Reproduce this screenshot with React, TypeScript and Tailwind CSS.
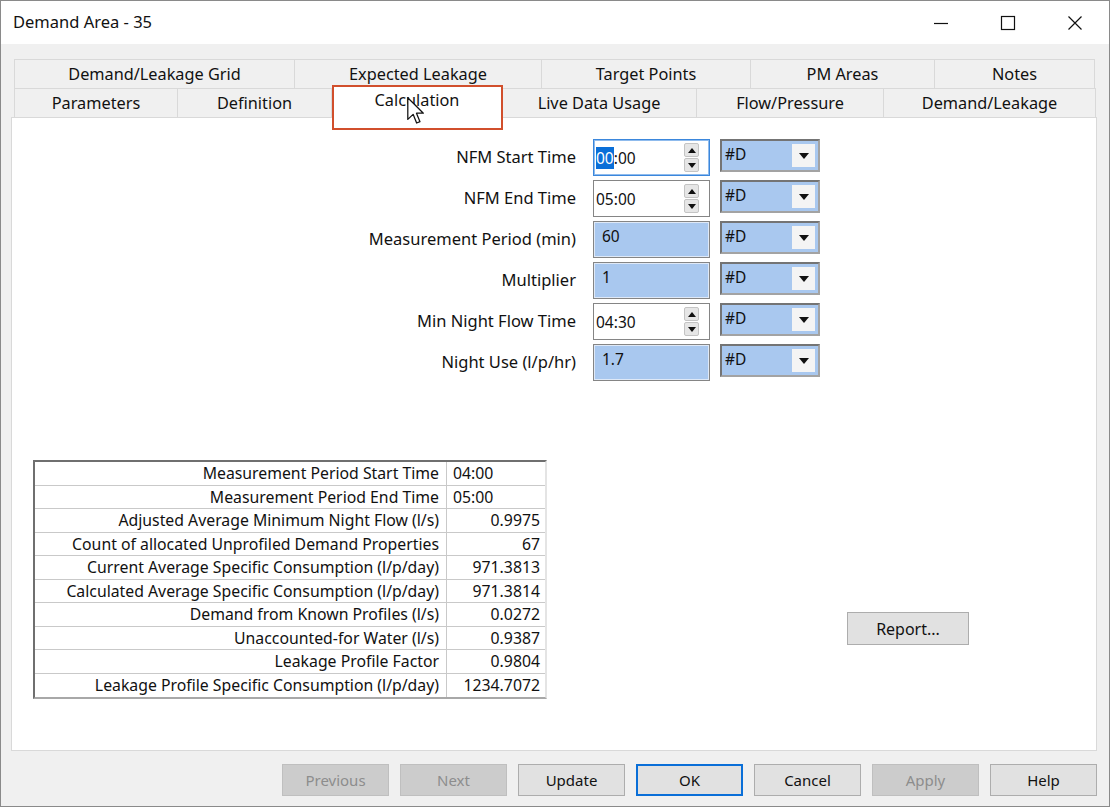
import React from 'react'

const row1 = [
  { label: 'Demand/Leakage Grid', w: 281 },
  { label: 'Expected Leakage', w: 247 },
  { label: 'Target Points', w: 209 },
  { label: 'PM Areas', w: 184 },
  { label: 'Notes', w: 160 },
]

const row2 = [
  { label: 'Parameters', w: 164 },
  { label: 'Definition', w: 154 },
  { label: 'Calculation', w: 170, active: true },
  { label: 'Live Data Usage', w: 195 },
  { label: 'Flow/Pressure', w: 187 },
  { label: 'Demand/Leakage', w: 212 },
]

type Field = { label: string; value: string; kind: 'time' | 'num'; focused?: boolean }

const fields: Field[] = [
  { label: 'NFM Start Time', value: '00:00', kind: 'time', focused: true },
  { label: 'NFM End Time', value: '05:00', kind: 'time' },
  { label: 'Measurement Period (min)', value: '60', kind: 'num' },
  { label: 'Multiplier', value: '1', kind: 'num' },
  { label: 'Min Night Flow Time', value: '04:30', kind: 'time' },
  { label: 'Night Use (l/p/hr)', value: '1.7', kind: 'num' },
]

const results: { label: string; value: string; left?: boolean }[] = [
  { label: 'Measurement Period Start Time', value: '04:00', left: true },
  { label: 'Measurement Period End Time', value: '05:00', left: true },
  { label: 'Adjusted Average Minimum Night Flow (l/s)', value: '0.9975' },
  { label: 'Count of allocated Unprofiled Demand Properties', value: '67' },
  { label: 'Current Average Specific Consumption (l/p/day)', value: '971.3813' },
  { label: 'Calculated Average Specific Consumption (l/p/day)', value: '971.3814' },
  { label: 'Demand from Known Profiles (l/s)', value: '0.0272' },
  { label: 'Unaccounted-for Water (l/s)', value: '0.9387' },
  { label: 'Leakage Profile Factor', value: '0.9804' },
  { label: 'Leakage Profile Specific Consumption (l/p/day)', value: '1234.7072' },
]

const buttons = [
  { label: 'Previous', disabled: true },
  { label: 'Next', disabled: true },
  { label: 'Update' },
  { label: 'OK', primary: true },
  { label: 'Cancel' },
  { label: 'Apply', disabled: true },
  { label: 'Help' },
]

function Spinner() {
  return (
    <div className="flex flex-col gap-[1px] mr-[10px]">
      <div className="w-[15px] h-[14px] bg-[#e6e6e6] border border-[#c4c4c4] rounded-[2px] flex items-center justify-center">
        <svg width="8" height="5" viewBox="0 0 8 5"><path d="M4 0 L8 5 L0 5 Z" fill="#111" /></svg>
      </div>
      <div className="w-[15px] h-[14px] bg-[#e6e6e6] border border-[#c4c4c4] rounded-[2px] flex items-center justify-center">
        <svg width="8" height="5" viewBox="0 0 8 5"><path d="M0 0 L8 0 L4 5 Z" fill="#111" /></svg>
      </div>
    </div>
  )
}

function Combo() {
  return (
    <div className="ml-[10px] w-[100px] h-[33px] flex border-2 border-t-[#747474] border-l-[#747474] border-r-[#a3a3a3] border-b-[#a3a3a3] bg-[#a9c8ef]">
      <div className="flex-1 pl-[3px] pt-[3px] text-[15.5px] leading-[20px]">#D</div>
      <div className="w-[23px] m-[3px] bg-[#f4f4f4] flex items-center justify-center">
        <svg width="10" height="6" viewBox="0 0 10 6"><path d="M0 0 L10 0 L5 6 Z" fill="#111" /></svg>
      </div>
    </div>
  )
}

function FieldInput({ f }: { f: Field }) {
  if (f.kind === 'num') {
    return (
      <div className="ml-[17px] w-[117px] h-[37px] border border-[#858585] bg-[#a9c8ef] shadow-[inset_0_0_0_1px_#dfe9f7] pl-[8px] pt-[4px] text-[15.5px] leading-[20px]">
        {f.value}
      </div>
    )
  }
  return (
    <div
      className={`ml-[17px] w-[117px] h-[37px] bg-white flex items-center ${
        f.focused ? 'border border-[#3b87dc] shadow-[inset_0_0_0_1px_#8fbbed]' : 'border border-[#858585]'
      }`}
    >
      <div className="flex-1 pl-[2px] text-[15.5px] leading-[20px]">
        {f.focused ? (
          <>
            <span className="bg-[#0a6fd8] text-white">00</span>:00
          </>
        ) : (
          f.value
        )}
      </div>
      <Spinner />
    </div>
  )
}

export default function App() {
  return (
    <div className="relative w-[1111px] h-[808px] overflow-hidden bg-white font-['Noto_Sans','Open_Sans',sans-serif] text-[#111]">
      <div className="w-[1110px] h-[807px] border border-[#8a8a8a] bg-[#f0f0f0] flex flex-col">
        {/* title bar */}
        <div className="h-[43px] bg-white flex items-center pl-[12px] shrink-0">
          <span className="text-[16.5px]">Demand Area - 35</span>
          <div className="ml-auto flex items-center">
            <div className="w-[67px] flex justify-center">
              <svg width="16" height="16" viewBox="0 0 16 16"><path d="M1 8.5 H15" stroke="#111" strokeWidth="1.2" /></svg>
            </div>
            <div className="w-[67px] flex justify-center">
              <svg width="16" height="16" viewBox="0 0 16 16"><rect x="1.5" y="1.5" width="13" height="13" fill="none" stroke="#111" strokeWidth="1.2" /></svg>
            </div>
            <div className="w-[67px] flex justify-center mr-[1px]">
              <svg width="16" height="16" viewBox="0 0 16 16"><path d="M1.5 1.5 L14.5 14.5 M14.5 1.5 L1.5 14.5" stroke="#111" strokeWidth="1.2" /></svg>
            </div>
          </div>
        </div>

        {/* tabs */}
        <div className="pl-[13px] pt-[15px] shrink-0">
          <div className="flex h-[29px]">
            {row1.map((t, i) => (
              <div
                key={t.label}
                style={{ width: t.w }}
                className={`border-t border-r border-[#d9d9d9] flex items-center justify-center text-[16.3px] ${i === 0 ? 'border-l' : ''}`}
              >
                {t.label}
              </div>
            ))}
          </div>
          <div className="flex h-[29px] relative z-10">
            {row2.map((t, i) =>
              t.active ? (
                <div
                  key={t.label}
                  style={{ width: t.w }}
                  className="bg-white -mt-[2px] h-[32px] border-t border-r border-l border-[#d9d9d9] flex justify-center pt-[1px] text-[16.3px]"
                >
                  {t.label}
                </div>
              ) : (
                <div
                  key={t.label}
                  style={{ width: t.w }}
                  className={`border-t border-r border-[#d9d9d9] flex items-center justify-center text-[16.3px] ${i === 0 ? 'border-l' : ''}`}
                >
                  {t.label}
                </div>
              )
            )}
          </div>
        </div>

        {/* panel */}
        <div className="ml-[10px] w-[1086px] h-[634px] bg-white border border-[#d9d9d9] shrink-0 pt-[21px]">
          <div className="flex flex-col gap-[4px]">
            {fields.map((f) => (
              <div key={f.label} className="flex h-[37px]">
                <div className="w-[564px] text-right text-[16.5px] self-center">{f.label}</div>
                <FieldInput f={f} />
                <Combo />
              </div>
            ))}
          </div>

          <div className="flex mt-[79px] ml-[21px]">
            <div className="w-[514px] border-2 border-t-[#6f6f6f] border-l-[#6f6f6f] border-r-[#e4e4e4] border-b-[#a8a8a8] text-[15.8px]">
              {results.map((r, i) => (
                <div
                  key={r.label}
                  className={`flex h-[23.5px] ${i < results.length - 1 ? 'border-b border-[#c9c9c9]' : ''}`}
                >
                  <div className="w-[412px] border-r border-[#c9c9c9] text-right pr-[7px] leading-[22px] whitespace-nowrap">{r.label}</div>
                  <div className={`flex-1 leading-[22px] ${r.left ? 'text-left pl-[6px]' : 'text-right pr-[5px]'}`}>{r.value}</div>
                </div>
              ))}
            </div>
            <div className="ml-[300px] mt-[152px] w-[122px] h-[33px] bg-[#e1e1e1] border border-[#adadad] flex items-center justify-center text-[16px]">
              Report...
            </div>
          </div>
        </div>

        {/* buttons */}
        <div className="flex gap-[11px] mt-[13px] pl-[281px] shrink-0">
          {buttons.map((b) => (
            <div
              key={b.label}
              className={`w-[107px] h-[32px] flex items-center justify-center text-[15px] ${
                b.disabled
                  ? 'bg-[#cccccc] border border-[#bfbfbf] text-[#8d8d8d]'
                  : b.primary
                  ? 'bg-[#e1e1e1] border-2 border-[#0a6fd8]'
                  : 'bg-[#e1e1e1] border border-[#adadad]'
              }`}
            >
              {b.label}
            </div>
          ))}
        </div>
      </div>

      {/* annotation highlight */}
      <div className="absolute left-[332px] top-[85px] w-[171px] h-[45px] border-[2.5px] border-[#d14f2c] z-20" />
      {/* mouse cursor */}
      <svg className="absolute left-[407px] top-[97px] z-30" width="17" height="28" viewBox="0 0 12 20">
        <path d="M0.5 0.5 L0.5 16 L4.3 12.4 L6.8 18.6 L9.2 17.6 L6.7 11.6 L11.6 11.6 Z" fill="#fff" stroke="#111" strokeWidth="0.9" strokeLinejoin="round" />
      </svg>
    </div>
  )
}
